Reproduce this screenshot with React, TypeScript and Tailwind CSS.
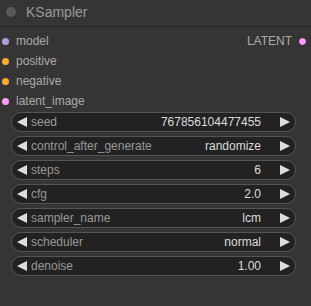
const inputs = [
  { name: "model", color: "bg-[#b39ddb]" },
  { name: "positive", color: "bg-[#ffa931]" },
  { name: "negative", color: "bg-[#ffa931]" },
  { name: "latent_image", color: "bg-[#ff9cf9]" },
];

const widgets = [
  { label: "seed", value: "767856104477455" },
  { label: "control_after_generate", value: "randomize" },
  { label: "steps", value: "6" },
  { label: "cfg", value: "2.0" },
  { label: "sampler_name", value: "lcm" },
  { label: "scheduler", value: "normal" },
  { label: "denoise", value: "1.00" },
];

function Arrow({ dir }: { dir: "left" | "right" }) {
  return (
    <svg width="10" height="10" viewBox="0 0 10 10" className="shrink-0">
      <polygon
        points={dir === "left" ? "10,0 0,5 10,10" : "0,0 10,5 0,10"}
        fill="#dddddd"
      />
    </svg>
  );
}

export default function App() {
  return (
    <div
      className="w-[311px] h-[306px] bg-[#353535] overflow-hidden"
      style={{ fontFamily: '"Liberation Sans", Arial, sans-serif' }}
    >
      {/* Title */}
      <div className="h-[27px] flex items-center border-b border-[#262626] pb-[2px]">
        <div className="w-[10px] h-[10px] rounded-full bg-[#595959] ml-[6px]"></div>
        <span className="ml-[10px] text-[14px] text-[#999999]">KSampler</span>
      </div>

      {/* Slots */}
      <div className="pt-[4px]">
        {inputs.map((input, i) => (
          <div key={input.name} className="h-[20px] flex items-center">
            <div className={`w-[7px] h-[7px] rounded-full ml-[2px] ${input.color}`}></div>
            <span className="ml-[7px] text-[12px] text-[#aaaaaa]">{input.name}</span>
            {i === 0 && (
              <div className="ml-auto flex items-center mr-[4px]">
                <span className="text-[12px] text-[#aaaaaa]">LATENT</span>
                <div className="w-[9px] h-[9px] rounded-full bg-[#ff9cf9] border border-[#1e1e1e] ml-[6px]"></div>
              </div>
            )}
          </div>
        ))}
      </div>

      {/* Widgets */}
      <div className="flex flex-col gap-[4px] mt-[1px] pl-[11px] pr-[15px]">
        {widgets.map((w) => (
          <div
            key={w.label}
            className="h-[20px] rounded-full bg-[#222222] border border-[#555555] flex items-center pl-[5px] pr-[5px] text-[12px]"
          >
            <Arrow dir="left" />
            <span className="ml-[4px] text-[#999999]">{w.label}</span>
            <span className="ml-auto text-[#dddddd]">{w.value}</span>
            <span className="ml-[19px]">
              <Arrow dir="right" />
            </span>
          </div>
        ))}
      </div>
    </div>
  );
}
